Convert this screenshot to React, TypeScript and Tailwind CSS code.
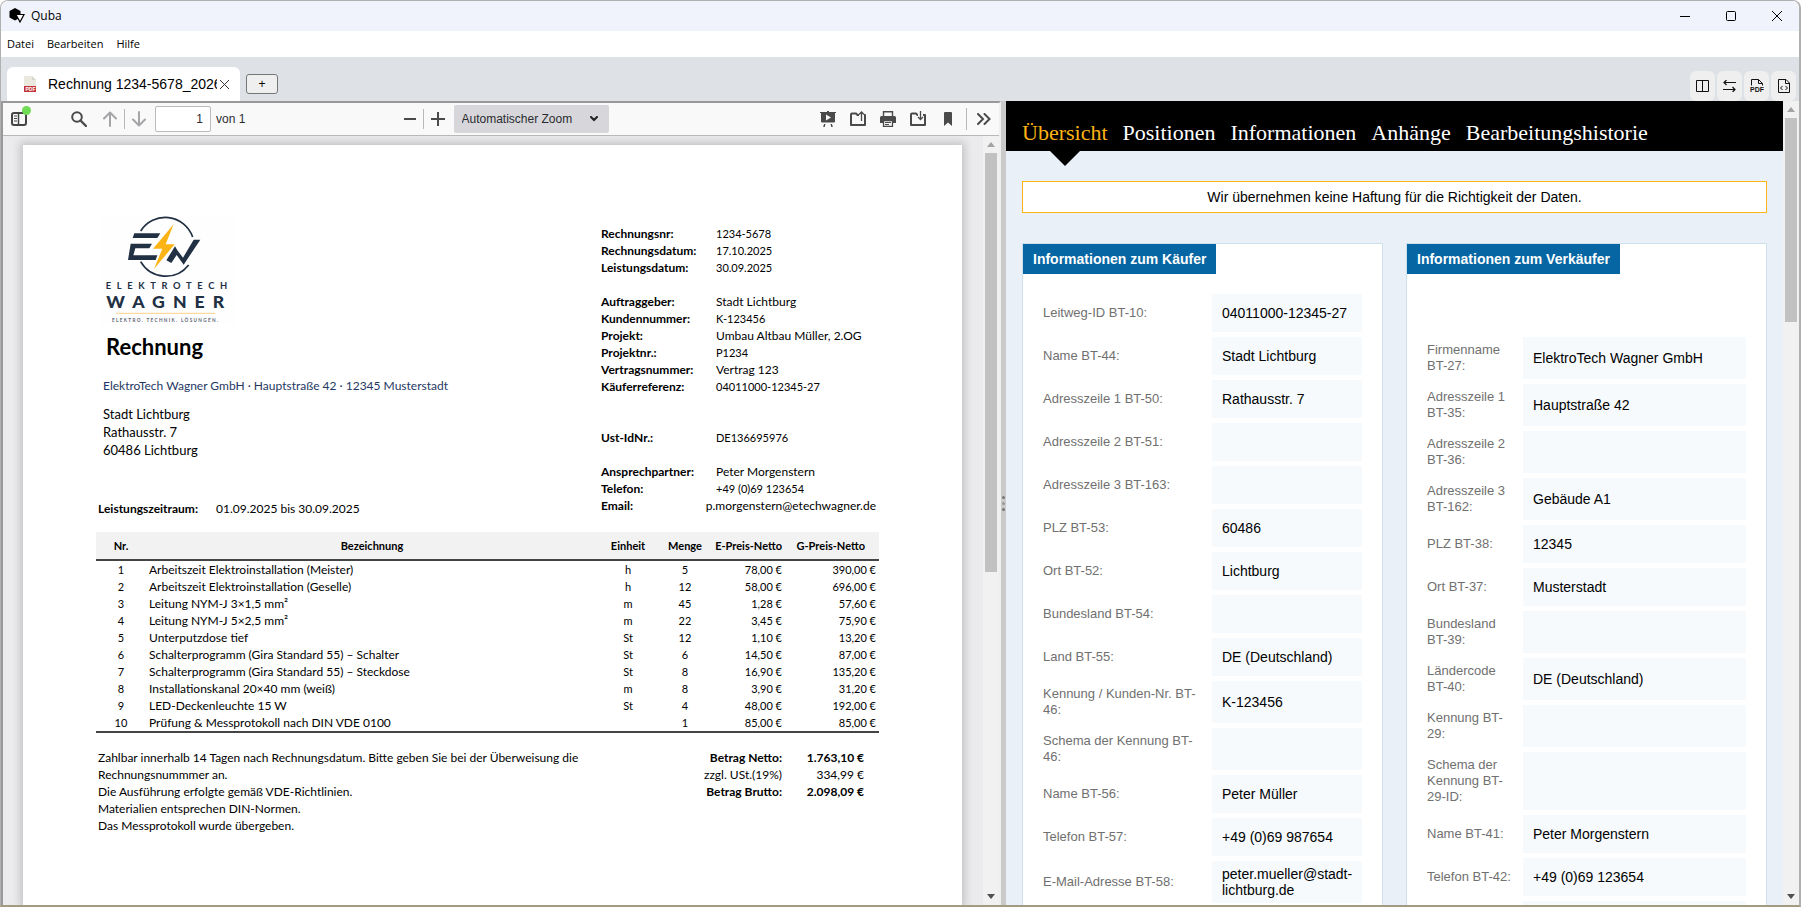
import { useState, type ReactNode } from "react";
import clsx from "clsx";

type Field = { label: string; value?: string };

type Position = {
  name: string;
  unit: string;
  amount: string;
  price: string;
  total: string;
};

const navItems = [
  "Übersicht",
  "Positionen",
  "Informationen",
  "Anhänge",
  "Bearbeitungshistorie",
];

const buyer: Field[] = [
  { label: "Leitweg-ID BT-10:", value: "04011000-12345-27" },
  { label: "Name BT-44:", value: "Stadt Lichtburg" },
  { label: "Adresszeile 1 BT-50:", value: "Rathausstr. 7" },
  { label: "Adresszeile 2 BT-51:" },
  { label: "Adresszeile 3 BT-163:" },
  { label: "PLZ BT-53:", value: "60486" },
  { label: "Ort BT-52:", value: "Lichtburg" },
  { label: "Bundesland BT-54:" },
  { label: "Land BT-55:", value: "DE (Deutschland)" },
  { label: "Kennung / Kunden-Nr. BT-46:", value: "K-123456" },
  { label: "Schema der Kennung BT-46:" },
  { label: "Name BT-56:", value: "Peter Müller" },
  { label: "Telefon BT-57:", value: "+49 (0)69 987654" },
  { label: "E-Mail-Adresse BT-58:", value: "peter.mueller@stadt-lichtburg.de" },
];

const seller: Field[] = [
  { label: "Firmenname BT-27:", value: "ElektroTech Wagner GmbH" },
  { label: "Adresszeile 1 BT-35:", value: "Hauptstraße 42" },
  { label: "Adresszeile 2 BT-36:" },
  { label: "Adresszeile 3 BT-162:", value: "Gebäude A1" },
  { label: "PLZ BT-38:", value: "12345" },
  { label: "Ort BT-37:", value: "Musterstadt" },
  { label: "Bundesland BT-39:" },
  { label: "Ländercode BT-40:", value: "DE (Deutschland)" },
  { label: "Kennung BT-29:" },
  { label: "Schema der Kennung BT-29-ID:" },
  { label: "Name BT-41:", value: "Peter Morgenstern" },
  { label: "Telefon BT-42:", value: "+49 (0)69 123654" },
  { label: "" },
];

// null leaves one line empty
const meta: ([string, string] | null)[] = [
  ["Rechnungsnr:", "1234-5678"],
  ["Rechnungsdatum:", "17.10.2025"],
  ["Leistungsdatum:", "30.09.2025"],
  null,
  ["Auftraggeber:", "Stadt Lichtburg"],
  ["Kundennummer:", "K-123456"],
  ["Projekt:", "Umbau Altbau Müller, 2.OG"],
  ["Projektnr.:", "P1234"],
  ["Vertragsnummer:", "Vertrag 123"],
  ["Käuferreferenz:", "04011000-12345-27"],
  null,
  null,
  ["Ust-IdNr.:", "DE136695976"],
  null,
  ["Ansprechpartner:", "Peter Morgenstern"],
  ["Telefon:", "+49 (0)69 123654"],
  ["Email:", "p.morgenstern@etechwagner.de"],
];

const positions: Position[] = [
  { name: "Arbeitszeit Elektroinstallation (Meister)", unit: "h", amount: "5", price: "78,00 €", total: "390,00 €" },
  { name: "Arbeitszeit Elektroinstallation (Geselle)", unit: "h", amount: "12", price: "58,00 €", total: "696,00 €" },
  { name: "Leitung NYM-J 3×1,5 mm²", unit: "m", amount: "45", price: "1,28 €", total: "57,60 €" },
  { name: "Leitung NYM-J 5×2,5 mm²", unit: "m", amount: "22", price: "3,45 €", total: "75,90 €" },
  { name: "Unterputzdose tief", unit: "St", amount: "12", price: "1,10 €", total: "13,20 €" },
  { name: "Schalterprogramm (Gira Standard 55) – Schalter", unit: "St", amount: "6", price: "14,50 €", total: "87,00 €" },
  { name: "Schalterprogramm (Gira Standard 55) – Steckdose", unit: "St", amount: "8", price: "16,90 €", total: "135,20 €" },
  { name: "Installationskanal 20×40 mm (weiß)", unit: "m", amount: "8", price: "3,90 €", total: "31,20 €" },
  { name: "LED-Deckenleuchte 15 W", unit: "St", amount: "4", price: "48,00 €", total: "192,00 €" },
  { name: "Prüfung & Messprotokoll nach DIN VDE 0100", unit: "", amount: "1", price: "85,00 €", total: "85,00 €" },
];

const IconButton = ({
  label,
  className,
  children,
}: {
  label: string;
  className?: string;
  children: ReactNode;
}) => (
  <button
    type="button"
    aria-label={label}
    className={clsx("flex shrink-0 items-center justify-center", className)}
  >
    {children}
  </button>
);

const TitleBar = () => (
  <header className="flex h-[30px] shrink-0 items-center bg-[#f0f3fb] pl-2">
    <svg width="16" height="16" viewBox="0 0 16 16">
      <path d="M6 0l5.500 3v6.500L6 12.500.5 9.500V3z" fill="#000" />
      <path d="M7 6.500h8l-4 7.500z" fill="#fff" stroke="#000" strokeWidth="1.200" />
    </svg>
    <span className="ml-1.5 text-xs">Quba</span>
    <div className="-mr-px ml-auto flex">
      <IconButton label="Minimieren" className="h-[30px] w-[46px]">
        <svg width="10" height="10" viewBox="0 0 10 10">
          <path d="M0 5.500h10" stroke="#000" />
        </svg>
      </IconButton>
      <IconButton label="Maximieren" className="h-[30px] w-[46px]">
        <svg width="10" height="10" viewBox="0 0 10 10">
          <rect x=".5" y=".5" width="9" height="9" rx="1" fill="none" stroke="#000" />
        </svg>
      </IconButton>
      <IconButton label="Schließen" className="h-[30px] w-[46px]">
        <svg width="10" height="10" viewBox="0 0 10 10">
          <path d="M0 0l10 10M10 0L0 10" stroke="#000" />
        </svg>
      </IconButton>
    </div>
  </header>
);

const MenuBar = () => (
  <nav className="flex h-[26px] shrink-0 items-center gap-[13px] bg-white px-1.5 text-[11px]">
    <button type="button">Datei</button>
    <button type="button">Bearbeiten</button>
    <button type="button">Hilfe</button>
  </nav>
);

const TabBar = () => (
  <div className="flex h-11 shrink-0 items-end bg-[#dee1e6] pr-[3px] pl-1.5 font-['Liberation_Sans',sans-serif]">
    <div className="flex h-[34px] w-[233px] items-center rounded-t-md bg-white pr-[11px] pl-[17px]">
      <svg className="shrink-0" width="12" height="16" viewBox="0 0 12 16">
        <path d="M0 0h8l4 4v12H0z" fill="#e9e9e0" />
        <path d="M8 0l4 4H8z" fill="#d9d7ca" />
        <path d="M0 10h12v6H0z" fill="#c4353a" />
        <text x="1.500" y="15" fontSize="5" fontWeight="bold" fill="#fff">
          PDF
        </text>
      </svg>
      <span className="ml-3 min-w-0 flex-1 overflow-hidden text-sm whitespace-nowrap">
        Rechnung 1234-5678_2026
      </span>
      <IconButton label="Tab schließen" className="ml-[3px]">
        <svg width="9" height="9" viewBox="0 0 9 9">
          <path d="M0 0l9 9M9 0L0 9" stroke="#333" />
        </svg>
      </IconButton>
    </div>
    <button
      type="button"
      aria-label="Neuer Tab"
      className="mb-[7px] ml-1.5 h-5 w-8 rounded-[3px] border border-[#767676] bg-[#efefef] text-xs leading-4"
    >
      +
    </button>
    <div className="ml-auto flex gap-0.5">
      <IconButton label="Geteilte Ansicht" className="h-[30px] w-[25px] rounded-md bg-[#efefef]">
        <svg width="13" height="12" viewBox="0 0 13 12">
          <path d="M.5.5h12v11H.5zM6.500.5v11" fill="none" stroke="#111" />
        </svg>
      </IconButton>
      <IconButton label="Seiten tauschen" className="h-[30px] w-[25px] rounded-md bg-[#efefef]">
        <svg width="13" height="12" viewBox="0 0 13 12">
          <path
            d="M13 2.500H1M3.500 0L1 2.500 3.500 5M0 9.500h12M9.500 7L12 9.500 9.500 12"
            fill="none"
            stroke="#111"
            strokeWidth="1.200"
          />
        </svg>
      </IconButton>
      <IconButton label="PDF öffnen" className="h-[30px] w-[25px] rounded-md bg-[#efefef]">
        <svg width="14" height="14" viewBox="0 0 14 14">
          <path d="M1.500 6.500v-6h7l4 4v2M8.500.5v4h4" fill="none" stroke="#111" />
          <text x="0" y="13" fontSize="7" fontWeight="bold" fill="#111">
            PDF
          </text>
        </svg>
      </IconButton>
      <IconButton label="XML öffnen" className="h-[30px] w-[25px] rounded-md bg-[#efefef]">
        <svg width="12" height="14" viewBox="0 0 12 14" fill="none" stroke="#111">
          <path d="M.5.5H8l3.500 3.500v9.500H.5zM7.500.5v4h4" />
          <path d="M4.500 7l-2 2 2 2M7.500 7l2 2-2 2" />
        </svg>
      </IconButton>
    </div>
  </div>
);

const ViewerToolbar = () => {
  const [zoom, setZoom] = useState("auto");
  const [page, setPage] = useState("1");

  return (
    <div className="flex h-[33px] shrink-0 items-center border-b border-[#b8b8b8] bg-[#f9f9fa] px-2 font-['Liberation_Sans',sans-serif] text-xs text-[#2b2b2f]">
      <div className="flex flex-1 items-center">
        <IconButton label="Sidebar umschalten" className="relative">
          <svg width="16" height="14" viewBox="0 0 16 14" fill="none" stroke="#444">
            <rect x="1" y="1" width="14" height="12" rx="2" strokeWidth="2" />
            <path d="M7.500 1v12" strokeWidth="1.500" />
            <path d="M3 4h3M3 6.500h3M3 9h3" />
          </svg>
          <span className="absolute -top-[6px] -right-1 size-[9px] rounded-full bg-[#70db55]" />
        </IconButton>
        <IconButton label="Suchen" className="ml-11">
          <svg width="16" height="16" viewBox="0 0 16 16" fill="none" stroke="#4a4a4a">
            <circle cx="6" cy="6" r="4.800" strokeWidth="2" />
            <path d="M9.500 9.500l5.500 5.500" strokeWidth="2.400" strokeLinecap="round" />
          </svg>
        </IconButton>
        <IconButton label="Vorherige Seite" className="ml-4">
          <svg width="14" height="16" viewBox="0 0 14 16" fill="none" stroke="#a5a5a7" strokeWidth="2">
            <path d="M7 15V1.500M1 7.500l6-6 6 6" strokeLinecap="round" strokeLinejoin="round" />
          </svg>
        </IconButton>
        <span className="mx-[7px] h-5 w-px bg-[#b8b8b8]" />
        <IconButton label="Nächste Seite">
          <svg width="14" height="16" viewBox="0 0 14 16" fill="none" stroke="#a5a5a7" strokeWidth="2">
            <path d="M7 1v13.500M1 8.500l6 6 6-6" strokeLinecap="round" strokeLinejoin="round" />
          </svg>
        </IconButton>
        <input
          aria-label="Seite"
          value={page}
          onChange={(e) => setPage(e.target.value)}
          className="ml-[9px] h-[26px] w-14 rounded-xs border border-[#bbbbbc] bg-white pr-[7px] text-right"
        />
        <span className="ml-[5px]">von 1</span>
      </div>

      <div className="flex items-center pl-2.5">
        <IconButton label="Verkleinern">
          <svg width="12" height="14" viewBox="0 0 12 14">
            <path d="M0 7h12" stroke="#4a4a4a" strokeWidth="2" />
          </svg>
        </IconButton>
        <span className="mx-[7px] h-5 w-px bg-[#b8b8b8]" />
        <IconButton label="Vergrößern">
          <svg width="14" height="14" viewBox="0 0 14 14">
            <path d="M0 7h14M7 0v14" stroke="#4a4a4a" strokeWidth="2" />
          </svg>
        </IconButton>
        <div className="relative ml-[9px]">
          <select
            aria-label="Zoom"
            value={zoom}
            onChange={(e) => setZoom(e.target.value)}
            className="h-7 w-[155px] appearance-none rounded-xs bg-[#d7d7db] pl-2"
          >
            <option value="auto">Automatischer Zoom</option>
            <option value="page">Seitengröße</option>
          </select>
          <svg
            className="pointer-events-none absolute top-[11px] right-[11px]"
            width="8"
            height="6"
            viewBox="0 0 8 6"
          >
            <path d="M1 1l3 3 3-3" fill="none" stroke="#222" strokeWidth="2" strokeLinecap="round" />
          </svg>
        </div>
      </div>

      <div className="flex flex-1 items-center justify-end">
        <div className="flex items-center gap-3.5">
          <IconButton label="Präsentationsmodus">
            <svg width="16" height="16" viewBox="0 0 16 16" fill="#4a4a4a">
              <path d="M0 1h7V0h2v1h7v1h-1v8.500a1 1 0 01-1 1H2a1 1 0 01-1-1V2H0z" />
              <path d="M6 3.500v6l5-3z" fill="#f9f9fa" />
              <path d="M4 13h1.500l-.8 3H3.200zM10.500 13H12l.8 3h-1.500z" />
            </svg>
          </IconButton>
          <IconButton label="Öffnen">
            <svg width="16" height="16" viewBox="0 0 16 16" fill="none" stroke="#4a4a4a">
              <path d="M9 4H7.500L6 2.500H2a1 1 0 00-1 1V14h14V4h-1" strokeWidth="2" strokeLinejoin="round" />
              <path d="M11.500 10V1M9 3.500L11.500 1 14 3.500" strokeWidth="1.300" />
            </svg>
          </IconButton>
          <IconButton label="Drucken">
            <svg width="16" height="16" viewBox="0 0 16 16" fill="#4a4a4a">
              <path d="M3.500 5V.7h9V5" fill="none" stroke="#4a4a4a" strokeWidth="1.400" />
              <path d="M1.500 5h13A1.500 1.500 0 0116 6.500V12h-3V9.500H3V12H0V6.500A1.500 1.500 0 011.500 5z" />
              <path d="M3.500 9.500h9v5.800h-9z" fill="#f9f9fa" stroke="#4a4a4a" strokeWidth="1.300" />
              <path d="M5 11.500h6M5 13.500h4" stroke="#4a4a4a" />
            </svg>
          </IconButton>
          <IconButton label="Speichern">
            <svg width="16" height="16" viewBox="0 0 16 16" fill="none" stroke="#4a4a4a">
              <path d="M8 4h-.5L6 2.500H2a1 1 0 00-1 1V14h14V4h-2" strokeWidth="2" strokeLinejoin="round" />
              <path d="M10.500 0v8.500M8 6l2.500 2.500L13 6" strokeWidth="1.300" />
            </svg>
          </IconButton>
          <IconButton label="Aktuelle Ansicht" className="w-4">
            <svg width="8" height="14" viewBox="0 0 8 14">
              <path d="M1 0h6a1 1 0 011 1v13L4 10.500 0 14V1a1 1 0 011-1z" fill="#4a4a4a" />
            </svg>
          </IconButton>
        </div>
        <span className="mx-2.5 h-[22px] w-px bg-[#b8b8b8]" />
        <IconButton label="Werkzeuge">
          <svg width="14" height="12" viewBox="0 0 14 12">
            <path
              d="M1 1l5 5-5 5M7.500 1l5 5-5 5"
              fill="none"
              stroke="#4a4a4a"
              strokeWidth="2"
              strokeLinecap="round"
            />
          </svg>
        </IconButton>
      </div>
    </div>
  );
};

const CompanyLogo = () => (
  <svg
    className="ml-1 bg-[#fefefe] font-['Lato',sans-serif]"
    width="135"
    height="109"
    viewBox="60 45 405 327"
  >
    <path
      d="M182 90A87 87 0 01338 108M182 182A87 87 0 00326 192"
      fill="none"
      stroke="#223044"
      strokeWidth="5"
    />
    <path d="M163 97h78l-9 14h-74z" fill="#223044" />
    <path d="M152 128h64l-8 14h-42l-6 21h72l-5 14h-83z" fill="#223044" />
    <path
      d="M259 178l26-42 7 12 17 22 32-54h20l-50 75-21-29-16 24z"
      fill="#223044"
    />
    <path d="M281 70l-62 73h28l-25 61 62-74h-27z" fill="#fcb316" />
    <text x="77" y="265" fontSize="28" fontWeight="700" fill="#223044" className="tracking-[17px]">
      ELEKTROTECH
    </text>
    <text x="79" y="320" fontSize="53" fontWeight="900" fill="#223044" className="tracking-[24px]">
      WAGNER
    </text>
    <path d="M108 337h298" stroke="#fbd9a0" strokeWidth="4" />
    <text x="96" y="363" fontSize="14" fontWeight="700" fill="#5d6675" className="tracking-[4px]">
      ELEKTRO. TECHNIK. LÖSUNGEN.
    </text>
  </svg>
);

const Invoice = () => (
  <article className="mr-[21px] ml-5 min-h-0 flex-1 overflow-hidden bg-white pr-[83px] pl-[73px] font-['Lato',sans-serif] text-xs leading-[17px] text-black shadow-[0_0_8px_3px_rgba(0,0,0,0.17)]">
    <div className="flex items-start justify-between">
      <div className="pt-[71px]">
        <CompanyLogo />
        <h1 className="mt-2 ml-2.5 text-[22px] leading-7 font-bold">Rechnung</h1>
        <p className="mt-4 ml-[7px] text-[#1f3864]">
          ElektroTech Wagner GmbH · Hauptstraße 42 · 12345 Musterstadt
        </p>
        <p className="mt-[11px] ml-[7px] text-[13px] leading-[18px]">
          Stadt Lichtburg
          <br />
          Rathausstr. 7
          <br />
          60486 Lichtburg
        </p>
        <p className="mt-[41px] ml-0.5 flex">
          <b className="w-[118px]">Leistungszeitraum:</b>
          <span>01.09.2025 bis 30.09.2025</span>
        </p>
      </div>
      <dl className="w-[278px] pt-20">
        {meta.map((entry, i) => (
          <div key={i} className="flex h-[17px]">
            {entry && (
              <>
                <dt className={clsx("font-bold", entry[0] !== "Email:" && "w-[115px]")}>
                  {entry[0]}
                </dt>
                <dd
                  className={clsx(
                    entry[0] === "Email:" && "mr-[3px] ml-auto",
                    /\d{4}/.test(entry[1]) && "text-[11px]",
                  )}
                >
                  {entry[1]}
                </dd>
              </>
            )}
          </div>
        ))}
      </dl>
    </div>

    <table className="mt-[15px] w-full table-fixed border-collapse border-b-2 border-[#444] text-[11px]">
      <thead>
        <tr className="h-7 border-b-2 border-[#444] bg-[#f2f2f2] font-bold">
          <th className="w-[50px]">Nr.</th>
          <th>Bezeichnung</th>
          <th className="w-[60px]">Einheit</th>
          <th className="w-[54px]">Menge</th>
          <th className="w-[72px] pr-0.5 text-right whitespace-nowrap">E-Preis-Netto</th>
          <th className="w-[95px] pr-3.5 text-right whitespace-nowrap">G-Preis-Netto</th>
        </tr>
      </thead>
      <tbody>
        {positions.map((position, i) => (
          <tr key={position.name} className="text-center">
            <td>{i + 1}</td>
            <td className="pl-[3px] text-left text-xs leading-[17px]">{position.name}</td>
            <td>{position.unit}</td>
            <td>{position.amount}</td>
            <td className="pr-0.5 text-right">{position.price}</td>
            <td className="pr-[3px] text-right">{position.total}</td>
          </tr>
        ))}
      </tbody>
    </table>

    <div className="mt-4 flex justify-between">
      <p className="ml-0.5 w-[500px]">
        Zahlbar innerhalb 14 Tagen nach Rechnungsdatum. Bitte geben Sie bei der Überweisung die
        <br />
        Rechnungsnummmer an.
        <br />
        Die Ausführung erfolgte gemäß VDE-Richtlinien.
        <br />
        Materialien entsprechen DIN-Normen.
        <br />
        Das Messprotokoll wurde übergeben.
      </p>
      <dl className="mr-[15px] grid grid-cols-[auto_82px] content-start text-right">
        <dt className="font-bold">Betrag Netto:</dt>
        <dd className="font-bold">1.763,10 €</dd>
        <dt>zzgl. USt.(19%)</dt>
        <dd>334,99 €</dd>
        <dt className="font-bold">Betrag Brutto:</dt>
        <dd className="font-bold">2.098,09 €</dd>
      </dl>
    </div>
  </article>
);

// share is the thumb's part of the track, in percent
const Scrollbar = ({ share }: { share: number }) => (
  <div className="flex w-4 shrink-0 flex-col items-center bg-[#f1f1f1]">
    <svg className="my-[6px] shrink-0" width="8" height="5" viewBox="0 0 8 5">
      <path d="M4 0l4 5H0z" fill="#a3a3a3" />
    </svg>
    <div className="min-h-0 w-full flex-1 px-0.5">
      <div className="w-full bg-[#c1c1c1]" style={{ height: `${share}%` }} />
    </div>
    <svg className="my-[6px] shrink-0" width="8" height="5" viewBox="0 0 8 5">
      <path d="M0 0h8L4 5z" fill="#505050" />
    </svg>
  </div>
);

const Box = ({
  title,
  fields,
  wide = false,
}: {
  title: string;
  fields: Field[];
  wide?: boolean;
}) => (
  <section className="flex-1 border border-[#cde0eb] bg-white">
    <h2 className="inline-block bg-[#0666a3] px-2.5 text-sm leading-[30px] font-bold text-white">
      {title}
    </h2>
    <table
      className={clsx(
        "mx-5 w-[calc(100%-40px)] table-fixed border-separate border-spacing-x-0 border-spacing-y-[5px]",
        wide ? "mt-[58px]" : "mt-[15px]",
      )}
    >
      <tbody>
        {fields.map(({ label, value }) => (
          <tr key={label} className="h-[38px]">
            <th
              scope="row"
              className={clsx(
                "py-[5px] pr-2 text-left text-[13px] leading-4 font-normal text-[#707070]",
                wide ? "w-24" : "w-[169px]",
              )}
            >
              {label}
            </th>
            <td className="bg-[#f6fafd] px-2.5 py-[5px] text-sm leading-4">{value}</td>
          </tr>
        ))}
      </tbody>
    </table>
  </section>
);

const InvoiceData = () => {
  const [active, setActive] = useState("Übersicht");

  return (
    <div className="flex min-w-0 flex-1 flex-col overflow-hidden bg-[#e9f0f8] font-['Liberation_Sans',sans-serif]">
      <nav className="flex h-[50px] shrink-0 items-end gap-[15px] bg-black px-4 pb-1.5 font-['Liberation_Serif',serif] text-[22px] leading-6">
        {navItems.map((item) => (
          <button
            key={item}
            type="button"
            onClick={() => setActive(item)}
            className={clsx("relative", active === item ? "text-[#fdb414]" : "text-white")}
          >
            {item}
            {active === item && (
              <svg
                className="absolute top-[30px] left-1/2 -translate-x-1/2"
                width="30"
                height="15"
                viewBox="0 0 30 15"
              >
                <path d="M0 0h30L15 15z" />
              </svg>
            )}
          </button>
        ))}
      </nav>
      <p className="mx-4 mt-[30px] border border-[#fdb414] bg-white text-center text-sm leading-[30px]">
        Wir übernehmen keine Haftung für die Richtigkeit der Daten.
      </p>
      <div className="mx-4 mt-[30px] flex min-h-[700px] gap-[23px]">
        <Box title="Informationen zum Käufer" fields={buyer} />
        <Box title="Informationen zum Verkäufer" fields={seller} wide />
      </div>
    </div>
  );
};

export default function App() {
  return (
    <div className="flex h-screen flex-col overflow-hidden rounded-t-lg border border-r-2 border-b-2 border-[#b0b0b0] border-b-[#a39a82] bg-white font-['Open_Sans',sans-serif] text-black">
      <TitleBar />
      <MenuBar />
      <TabBar />
      <main className="flex min-h-0 flex-1">
        <div className="flex w-[1000px] max-w-[56%] min-w-0 flex-auto flex-col border-t-2 border-r-2 border-l-2 border-[#999] border-r-[#efefef]">
          <ViewerToolbar />
          <div className="flex min-h-0 flex-1 bg-[#ebebed]">
            <div className="flex min-w-0 flex-1 flex-col overflow-hidden pt-[9px]">
              <Invoice />
            </div>
            <Scrollbar share={57} />
          </div>
        </div>
        <div className="flex w-[5px] shrink-0 flex-col items-center justify-center gap-[3px] bg-[#cacaca]">
          <span className="size-[3px] rounded-full bg-[#777]" />
          <span className="size-[3px] rounded-full bg-[#999]" />
          <span className="size-[3px] rounded-full bg-[#777]" />
        </div>
        <div className="flex w-[793px] min-w-0 flex-auto">
          <InvoiceData />
          <Scrollbar share={26.5} />
        </div>
      </main>
    </div>
  );
}
